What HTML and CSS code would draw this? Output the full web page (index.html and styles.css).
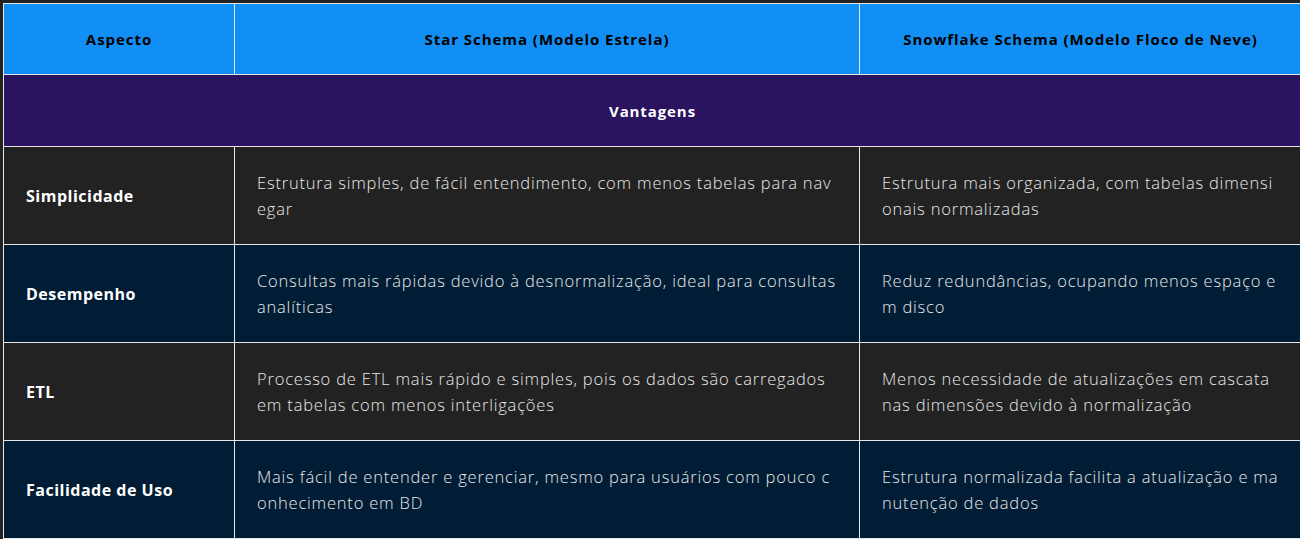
FILE: index.html
```html
<!DOCTYPE html>
<html lang="pt-BR">
<head>
<meta charset="utf-8">
<title>Star vs Snowflake</title>
<link rel="stylesheet" href="styles.css">
</head>
<body>
<div class="page">
  <table class="cmp">
    <colgroup>
      <col class="c1"><col class="c2"><col class="c3">
    </colgroup>
    <thead>
      <tr class="head">
        <th>Aspecto</th>
        <th>Star Schema (Modelo Estrela)</th>
        <th>Snowflake Schema (Modelo Floco de Neve)</th>
      </tr>
    </thead>
    <tbody>
      <tr class="section"><td colspan="3">Vantagens</td></tr>
      <tr class="row gray">
        <td class="aspect">Simplicidade</td>
        <td>Estrutura simples, de fácil entendimento, com menos tabelas para navegar</td>
        <td>Estrutura mais organizada, com tabelas dimensionais normalizadas</td>
      </tr>
      <tr class="row navy">
        <td class="aspect">Desempenho</td>
        <td>Consultas mais rápidas devido à desnormalização, ideal para consultas analíticas</td>
        <td>Reduz redundâncias, ocupando menos espaço em disco</td>
      </tr>
      <tr class="row gray">
        <td class="aspect">ETL</td>
        <td>Processo de ETL mais rápido e simples, pois os dados são carregados em tabelas com menos interligações</td>
        <td>Menos necessidade de atualizações em cascata nas dimensões devido à normalização</td>
      </tr>
      <tr class="row navy">
        <td class="aspect">Facilidade de Uso</td>
        <td>Mais fácil de entender e gerenciar, mesmo para usuários com pouco conhecimento em BD</td>
        <td>Estrutura normalizada facilita a atualização e manutenção de dados</td>
      </tr>
    </tbody>
  </table>
  <div class="after"></div>
</div>
</body>
</html>
```

FILE: styles.css
```css
html, body {
  margin: 0;
  padding: 0;
  background: #222222;
}
body {
  font-family: "Open Sans", "Noto Sans", "DejaVu Sans", sans-serif;
  overflow: hidden;
}
.page {
  padding: 3px 0 0 3px;
  width: 1300px;
}
.cmp {
  border-collapse: collapse;
  width: 1298px;
  table-layout: fixed;
}
.c1 { width: 231px; }
.c2 { width: 625px; }
.c3 { width: 442px; }
.cmp th, .cmp td {
  border: 1px solid #e6e6e6;
}
.head th {
  background: #118ff5;
  color: #000;
  font-weight: 700;
  font-size: 15px;
  letter-spacing: 0.95px;
  height: 70px;
  padding: 0;
  text-align: center;
  vertical-align: middle;
}
.section td {
  background: #2a135f;
  color: #fff;
  font-weight: 700;
  font-size: 15px;
  letter-spacing: 0.9px;
  height: 71px;
  padding: 0;
  text-align: center;
}
.row td {
  height: 97px;
  padding: 0 22px;
  font-size: 16.5px;
  font-weight: 300;
  line-height: 26px;
  letter-spacing: 0.8px;
  color: #e8e8e8;
  word-break: break-all;
  vertical-align: middle;
}
.row td.aspect {
  font-weight: 700;
  color: #fff;
  font-size: 16px;
  letter-spacing: 0.5px;
}
.gray td { background: #222222; }
.navy td { background: #011d35; }
.after {
  height: 4px;
  background: #0d5a5a;
}
```
